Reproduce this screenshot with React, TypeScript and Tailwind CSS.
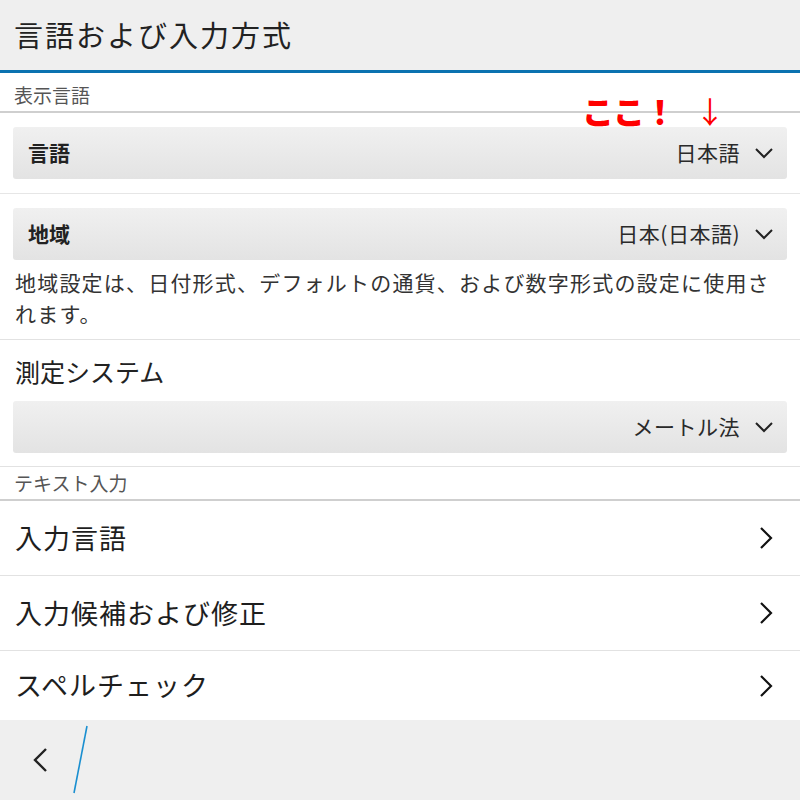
import { ReactNode } from "react"

const font = { fontFamily: '"Noto Sans CJK JP", "Noto Sans", sans-serif' }

function Chevron({ dir }: { dir: "down" | "right" | "left" }) {
  if (dir === "down") {
    return (
      <svg width="20" height="12" viewBox="0 0 20 12" fill="none">
        <path d="M2 2 L10 10 L18 2" stroke="#222" strokeWidth="2" />
      </svg>
    )
  }
  if (dir === "right") {
    return (
      <svg width="14" height="24" viewBox="0 0 14 24" fill="none">
        <path d="M2 2 L12 12 L2 22" stroke="#111" strokeWidth="2.2" />
      </svg>
    )
  }
  return (
    <svg width="16" height="26" viewBox="0 0 16 26" fill="none">
      <path d="M14 2 L3 13 L14 24" stroke="#222" strokeWidth="2.4" />
    </svg>
  )
}

function Dropdown({ label, value }: { label?: string; value: string }) {
  return (
    <div className="mx-[13px] h-[52px] rounded-[3px] bg-gradient-to-b from-[#f0f0f0] to-[#e3e3e3] flex items-center justify-between pl-[15px] pr-[13px]">
      <span className="text-[21px] font-bold text-[#222]">{label}</span>
      <div className="flex items-center gap-[14px]">
        <span className="text-[21px] tracking-[0.5px] text-[#2a2a2a]">{value}</span>
        <Chevron dir="down" />
      </div>
    </div>
  )
}

function SectionLabel({ children, h }: { children: ReactNode; h: string }) {
  return (
    <div className={`${h} flex items-end pb-[2px] px-[14px] text-[19px] text-[#555] border-b-2 border-[#cfcfcf]`}>
      {children}
    </div>
  )
}

function NavRow({ text, last }: { text: string; last?: boolean }) {
  return (
    <div className={`flex items-center justify-between px-[15px] pr-[27px] ${last ? "h-[69px]" : "h-[75px] border-b border-[#e2e2e2]"}`}>
      <span className="text-[27px] text-[#1e1e1e] tracking-[1px]">{text}</span>
      <Chevron dir="right" />
    </div>
  )
}

export default function App() {
  return (
    <div style={font} className="w-[800px] h-[800px] bg-white flex flex-col overflow-hidden relative">
      <header className="h-[73px] bg-[#efefef] border-b-[3px] border-[#0b72b0] flex items-center px-[14px]">
        <h1 className="text-[29px] text-[#222] tracking-[2px]">言語および入力方式</h1>
      </header>

      <SectionLabel h="h-[40px]">表示言語</SectionLabel>

      <div className="pt-[14px] pb-[14px] border-b border-[#e6e6e6]">
        <Dropdown label="言語" value="日本語" />
      </div>

      <div className="pt-[14px] pb-[10px] border-b border-[#e2e2e2]">
        <Dropdown label="地域" value="日本(日本語)" />
        <p className="mt-[7px] pl-[15px] pr-[20px] text-[21px] leading-[31px] tracking-[1.2px] text-[#333]">
          地域設定は、日付形式、デフォルトの通貨、および数字形式の設定に使用されます。
        </p>
      </div>

      <div className="pt-[14px] pb-[13px] border-b border-[#e2e2e2]">
        <div className="h-[36px] flex items-center px-[15px] text-[25px] text-[#222]">測定システム</div>
        <div className="mt-[11px]">
          <Dropdown value="メートル法" />
        </div>
      </div>

      <SectionLabel h="h-[34px]">テキスト入力</SectionLabel>

      <NavRow text="入力言語" />
      <NavRow text="入力候補および修正" />
      <NavRow text="スペルチェック" last />

      <footer className="flex-1 bg-[#efefef] relative flex items-center pl-[32px]">
        <Chevron dir="left" />
        <svg className="absolute left-[72px] top-[5px]" width="18" height="70" viewBox="0 0 18 70">
          <line x1="15" y1="1" x2="2" y2="68" stroke="#1a8fd0" strokeWidth="1.6" />
        </svg>
      </footer>

      <div className="absolute left-[582px] top-[86px] flex items-center">
        <span className="text-[32px] font-black text-[#ff0000] tracking-[-1px]">ここ！</span>
        <span className="ml-[20px] text-[30px] text-[#ff0000]">↓</span>
      </div>
    </div>
  )
}
